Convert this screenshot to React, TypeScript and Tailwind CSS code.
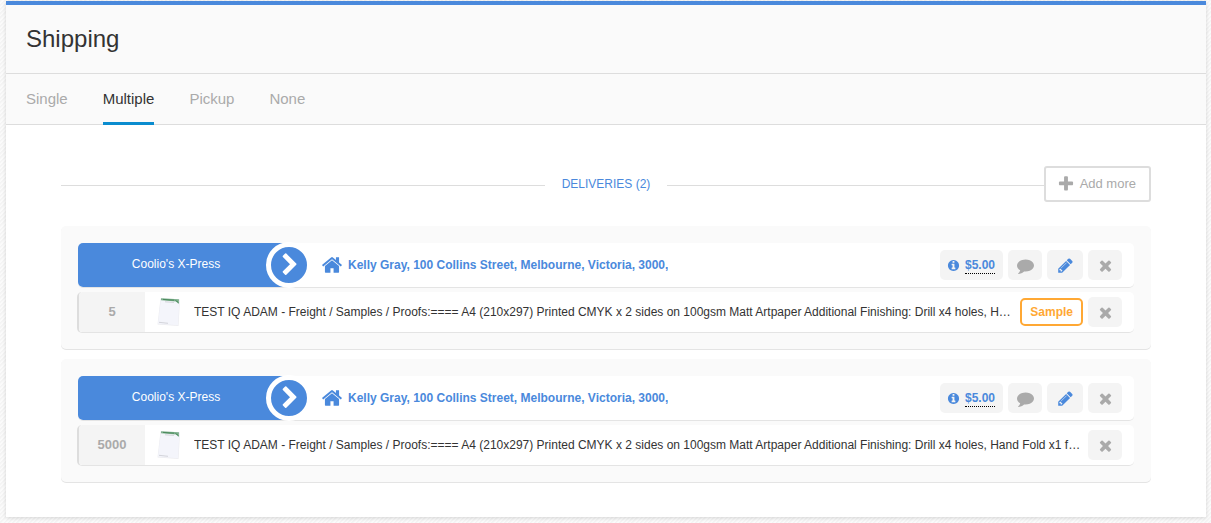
import React from 'react';

const ICONS = {
  plus: 'M1600 736v192q0 40-28 68t-68 28h-416v416q0 40-28 68t-68 28h-192q-40 0-68-28t-28-68v-416h-416q-40 0-68-28t-28-68v-192q0-40 28-68t68-28h416v-416q0-40 28-68t68-28h192q40 0 68 28t28 68v416h416q40 0 68 28t28 68z',
  times: 'M1490 1322q0 40-28 68l-136 136q-28 28-68 28t-68-28l-294-294-294 294q-28 28-68 28t-68-28l-136-136q-28-28-28-68t28-68l294-294-294-294q-28-28-28-68t28-68l136-136q28-28 68-28t68 28l294 294 294-294q28-28 68-28t68 28l136 136q28 28 28 68t-28 68l-294 294 294 294q28 28 28 68z',
  pencil: 'M491 1536l91-91-235-235-91 91v107h128v128h107zm523-928q0-22-22-22-10 0-17 7l-542 542q-7 7-7 17 0 22 22 22 10 0 17-7l542-542q7-7 7-17zm-54-192l416 416-832 832h-416v-416zm683 96q0 53-37 90l-166 166-416-416 166-165q36-38 90-38 53 0 91 38l235 234q37 39 37 91z',
  comment: 'M1792 896q0 174-120 321.5t-326 233-450 85.5q-70 0-145-8-198 175-460 242-49 14-114 22-17 2-30.5-9t-17.5-29v-1q-3-4-.5-12t2-10 4.5-9.5l6-9 7-8.5 8-9q7-8 31-34.5t34.5-38 31-39.5 32.5-51 27-59 26-76q-157-89-247.500-220t-90.500-281q0-130 71-248.500t191-204.500 286-136.500 348-50.500q244 0 450 85.500t326 233 120 321.500z',
  info: 'M1152 1376v-160q0-14-9-23t-23-9h-96v-512q0-14-9-23t-23-9h-320q-14 0-23 9t-9 23v160q0 14 9 23t23 9h96v320h-96q-14 0-23 9t-9 23v160q0 14 9 23t23 9h448q14 0 23-9t9-23zm-128-896v-160q0-14-9-23t-23-9h-192q-14 0-23 9t-9 23v160q0 14 9 23t23 9h192q14 0 23-9t9-23zm640 416q0 209-103 385.500t-279.500 279.500-385.500 103-385.500-103-279.500-279.500-103-385.500 103-385.500 279.500-279.500 385.500-103 385.500 103 279.500 279.500 103 385.500z',
  home: 'M1472 992v480q0 26-19 45t-45 19h-384v-384h-256v384h-384q-26 0-45-19t-19-45v-480q0-1 .5-3t.5-3l575-474 575 474q1 2 1 6zm223-69l-62 74q-8 9-21 11h-3q-13 0-21-7l-692-577-692 577q-12 8-24 7-13-2-21-11l-62-74q-8-10-7-23.500t11-21.500l719-599q32-26 76-26t76 26l244 204v-195q0-14 9-23t23-9h192q14 0 23 9t9 23v408l219 182q10 8 11 21.500t-7 23.500z',
  chevron: 'M1363 877l-742 742q-19 19-45 19t-45-19l-166-166q-19-19-19-45t19-45l531-531-531-531q-19-19-19-45t19-45l166-166q19-19 45-19t45 19l742 742q19 19 19 45t-19 45z',
};

function Icon({ name, className }: { name: keyof typeof ICONS; className: string }) {
  return (
    <svg viewBox="0 0 1792 1792" fill="currentColor" aria-hidden="true" className={`shrink-0 ${className}`}>
      <path d={ICONS[name]} />
    </svg>
  );
}

function Letterhead() {
  return (
    <svg viewBox="0 0 24 30" aria-hidden="true" className="h-[30px] w-6 shrink-0">
      <path d="M3.500 1.500 23 2.500 21.500 29 .5 27.500z" fill="#ececf0" />
      <path d="M4 1.500 22.500 2.500 21 28.300 1 26.800z" fill="#f4f5fb" />
      <path d="M4 1.300 22 2.300 21.700 7 19 4.600 4 3.200z" fill="#7fb08e" />
      <path d="M6 2.400 17 3.200M18.500 3.500 21.500 5.500" stroke="#4a8a5c" strokeWidth="1" />
      <path d="M8 4.800 17 5.400M2 25.300 11 26.300" stroke="#d3d4da" strokeWidth="1" />
    </svg>
  );
}

interface Item {
  quantity: number;
  description: string;
  sample?: boolean;
}

const DESCRIPTION =
  'TEST IQ ADAM - Freight / Samples / Proofs:==== A4 (210x297) Printed CMYK x 2 sides on 100gsm Matt Artpaper Additional Finishing: Drill x4 holes, Hand Fold x1 fold';

const DELIVERIES: Item[] = [
  { quantity: 5, description: DESCRIPTION, sample: true },
  { quantity: 5000, description: DESCRIPTION },
];

const TABS = ['Single', 'Multiple', 'Pickup', 'None'];

const square = 'flex h-[30px] w-[34px] shrink-0 items-center justify-center rounded-[5px] bg-[#f4f4f4] text-[#aaaaaa]';

function Delivery({ item }: { item: Item }) {
  return (
    <section className="flex flex-col gap-1 rounded-[5px] bg-[#fafafa] px-[17px] pt-[17px] pb-4 shadow-[0_1px_0_#e4e4e4]">
      <div className="flex h-[45px] items-center rounded-[5px] border-b border-[#e4e4e4] bg-white pr-3">
        <div className="flex h-11 w-[211px] shrink-0 items-center rounded-l-[5px] bg-[#4a89dc] pl-2 text-white">
          <span className="grow pb-0.5 text-center">Coolio&apos;s X-Press</span>
          <button
            type="button"
            aria-label="Delivery details"
            className="-mr-[23px] flex size-[46px] shrink-0 items-center justify-center rounded-full border-[5px] border-white bg-[#4a89dc] pl-0.5"
          >
            <Icon name="chevron" className="size-6" />
          </button>
        </div>
        <a href="#address" className="ml-8 flex min-w-0 grow items-center gap-[5px] font-bold text-[#4a89dc]">
          <Icon name="home" className="size-[22px]" />
          <span className="truncate">Kelly Gray, 100 Collins Street, Melbourne, Victoria, 3000,</span>
        </a>
        <div className="flex shrink-0 gap-[5px]">
          <button type="button" className="flex h-[30px] items-center gap-[5px] rounded-[5px] bg-[#f4f4f4] pr-2 pl-[7px] font-bold text-[#4a89dc]">
            <Icon name="info" className="size-[13px]" />
            <span className="border-b border-dotted border-black leading-4">$5.00</span>
          </button>
          <button type="button" aria-label="Comment" className={square}>
            <Icon name="comment" className="size-[17px]" />
          </button>
          <button type="button" aria-label="Edit delivery" className="flex h-[30px] w-9 items-center justify-center rounded-[5px] bg-[#f4f4f4] text-[#4a89dc]">
            <Icon name="pencil" className="size-[17px]" />
          </button>
          <button type="button" aria-label="Remove delivery" className={square}>
            <Icon name="times" className="size-[17px]" />
          </button>
        </div>
      </div>
      <div className="-ml-px flex h-[41px] items-center rounded-[5px] border-b border-l-2 border-b-[#e4e4e4] border-l-[#dddddd] bg-white pr-3">
        <span className="flex h-10 w-[66px] shrink-0 items-center justify-center rounded-l-[4px] bg-[#f4f4f4] text-[13px] font-bold text-[#aaaaaa]">
          {item.quantity}
        </span>
        <div className="flex min-w-0 grow items-center gap-[13px] pr-[6px] pl-3">
          <Letterhead />
          <span className="truncate text-[#333333]">{item.description}</span>
        </div>
        <div className="flex shrink-0 items-center gap-[5px]">
          {item.sample && (
            <span className="flex h-7 items-center rounded-[5px] border-2 border-[#ffa834] px-2 font-bold text-[#ffa834]">Sample</span>
          )}
          <button type="button" aria-label="Remove item" className={square}>
            <Icon name="times" className="size-[17px]" />
          </button>
        </div>
      </div>
    </section>
  );
}

export default function App() {
  return (
    <div className="min-h-screen bg-[#f8f8f8] bg-[repeating-linear-gradient(135deg,#f4f4f4_0px,#f4f4f4_1px,#fbfbfb_2px,#fbfbfb_3px)] pt-px pr-[5px] pb-[6px] pl-[6px] font-['Liberation_Sans',Arial,sans-serif] text-[12px] leading-4">
      <main className="border-t-4 border-[#4a89dc] bg-white shadow-[0_1px_4px_rgba(0,0,0,0.15)]">
        <header className="border-b border-[#dddddd] bg-[#fafafa] px-5 py-[18px]">
          <h1 className="text-[24px] leading-8 text-[#333333]">Shipping</h1>
        </header>
        <nav className="flex h-[51px] gap-[35px] border-b border-[#dddddd] bg-[#fafafa] px-5 text-[15px]">
          {TABS.map((tab) => (
            <button
              key={tab}
              type="button"
              className={
                tab === 'Multiple'
                  ? '-mb-px border-b-3 border-[#0a8ccf] pt-0.5 text-[#333333]'
                  : '-mb-px border-b-3 border-transparent pt-0.5 text-[#aaaaaa]'
              }
            >
              {tab}
            </button>
          ))}
        </nav>
        <div className="px-[55px] pt-[41px] pb-[35px]">
          <div className="mb-6 grid grid-cols-[1fr_auto_1fr] items-center">
            <div className="h-[3px] border-b border-[#dddddd]" />
            <h2 className="px-[17px] text-[12px] text-[#4a89dc]">DELIVERIES (2)</h2>
            <div className="flex items-center">
              <div className="h-[3px] grow border-b border-[#dddddd]" />
              <button type="button" className="flex h-9 items-center gap-[5px] rounded-[3px] border-2 border-[#dddddd] pr-[13px] pl-[11px] text-[13px] text-[#aaaaaa]">
                <Icon name="plus" className="size-[18px]" />
                Add more
              </button>
            </div>
          </div>
          <div className="flex flex-col gap-[10px]">
            {DELIVERIES.map((item) => (
              <Delivery key={item.quantity} item={item} />
            ))}
          </div>
        </div>
      </main>
    </div>
  );
}
